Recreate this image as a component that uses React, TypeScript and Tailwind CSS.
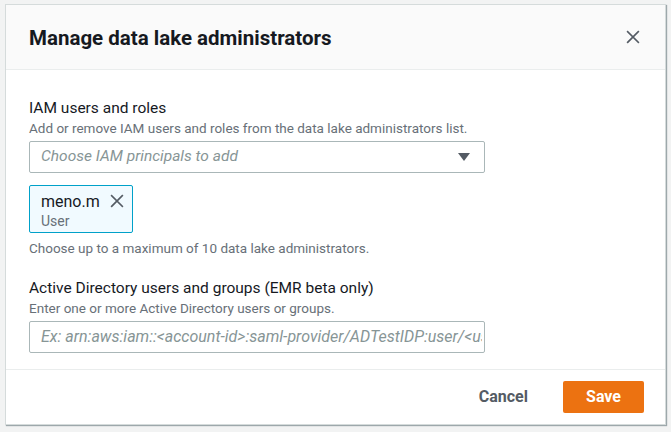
import React from 'react';

const FONT = { fontFamily: 'Roboto, "Noto Sans", sans-serif' };

const CloseIcon: React.FC<{ className?: string }> = ({ className }) => (
  <svg viewBox="0 0 16 16" className={className} fill="none" stroke="currentColor" strokeWidth={2} strokeLinecap="square">
    <path d="M2 2 L14 14 M14 2 L2 14" />
  </svg>
);

const App: React.FC = () => {
  return (
    <div className="w-[671px] h-[432px] bg-[#f2f3f3] pt-[4px] pl-[5px] overflow-hidden" style={FONT}>
      <div className="w-[661px] h-[421px] bg-white border border-[#d5dbdb] shadow-[1px_1px_1px_0_rgba(0,28,36,0.35)] flex flex-col">
        {/* Header */}
        <div className="h-[65px] bg-[#fafafa] border-b border-[#eaeded] flex items-center justify-between pl-[23px] pr-[25px] shrink-0">
          <h2 className="text-[20.5px] font-bold text-[#16191f] leading-[24px] pt-[1px]">Manage data lake administrators</h2>
          <CloseIcon className="w-[14px] h-[14px] text-[#545b64]" />
        </div>

        {/* Body */}
        <div className="flex-1 pl-[23px] pt-[27px]">
          <div className="text-[15.5px] leading-[22px] text-[#16191f]">IAM users and roles</div>
          <div className="text-[13.5px] leading-[18px] text-[#687078]">
            Add or remove IAM users and roles from the data lake administrators list.
          </div>
          <div className="mt-[4px] w-[456px] h-[32px] border border-[#aab7b8] rounded-[2px] flex items-center justify-between pl-[11px] pr-[14px]">
            <span className="italic text-[15.5px] text-[#879596]">Choose IAM principals to add</span>
            <svg viewBox="0 0 12 8" className="w-[12px] h-[8px]">
              <path d="M0 0 H12 L6 8 Z" fill="#545b64" />
            </svg>
          </div>

          <div className="mt-[12px] w-[104px] h-[48px] bg-[#f1faff] border border-[#00a1c9] rounded-[2px] flex justify-between pl-[11px] pr-[8px] pt-[5px]">
            <div className="flex flex-col">
              <span className="text-[16px] leading-[22px] text-[#16191f]">meno.m</span>
              <span className="text-[14px] leading-[16px] text-[#687078]">User</span>
            </div>
            <CloseIcon className="w-[14px] h-[14px] mt-[3px] text-[#545b64]" />
          </div>

          <div className="mt-[6px] text-[13.5px] leading-[18px] text-[#687078]">
            Choose up to a maximum of 10 data lake administrators.
          </div>

          <div className="mt-[20px] text-[15.5px] leading-[22px] text-[#16191f]">Active Directory users and groups (EMR beta only)</div>
          <div className="text-[13.5px] leading-[18px] text-[#687078]">Enter one or more Active Directory users or groups.</div>
          <div className="mt-[4px] w-[456px] h-[32px] border border-[#aab7b8] rounded-[2px] flex items-center pl-[11px] pr-[2px] overflow-hidden">
            <span className="italic text-[16px] text-[#879596] whitespace-nowrap overflow-hidden">
              Ex: arn:aws:iam::&lt;account-id&gt;:saml-provider/ADTestIDP:user/&lt;username&gt;
            </span>
          </div>
        </div>

        {/* Footer */}
        <div className="h-[55px] border-t border-[#eaeded] flex items-center justify-end gap-[35px] pr-[21px] shrink-0">
          <button className="text-[16px] font-bold text-[#545b64]">Cancel</button>
          <button className="w-[81px] h-[32px] bg-[#ec7211] rounded-[2px] text-white text-[16px] font-bold">Save</button>
        </div>
      </div>
    </div>
  );
};

export default App;
